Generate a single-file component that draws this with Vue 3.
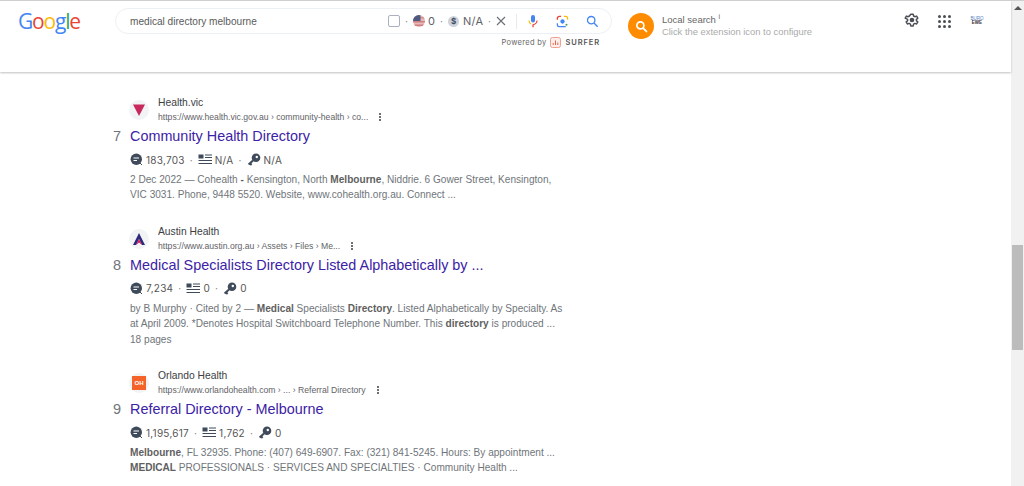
<script setup>
const results = [
  {
    rank: 7, site: 'Health.vic', fav: 'vic',
    url: 'https://www.health.vic.gov.au › community-health › co...',
    title: 'Community Health Directory',
    s1: '183,703', s2: 'N/A', s3: 'N/A',
    lines: [
      [['2 Dec 2022 — Cohealth ', 0], ['-', 1], [' Kensington, North ', 0], ['Melbourne', 1], [', Niddrie. 6 Gower Street, Kensington,', 0]],
      [['VIC 3031. Phone, 9448 5520. Website, www.cohealth.org.au. Connect ...', 0]]
    ]
  },
  {
    rank: 8, site: 'Austin Health', fav: 'austin',
    url: 'https://www.austin.org.au › Assets › Files › Me...',
    title: 'Medical Specialists Directory Listed Alphabetically by ...',
    s1: '7,234', s2: '0', s3: '0',
    lines: [
      [['by B Murphy · Cited by 2 — ', 0], ['Medical', 1], [' Specialists ', 0], ['Directory', 1], ['. Listed Alphabetically by Specialty. As', 0]],
      [['at April 2009. *Denotes Hospital Switchboard Telephone Number. This ', 0], ['directory', 1], [' is produced ...', 0]],
      [['18 pages', 0]]
    ]
  },
  {
    rank: 9, site: 'Orlando Health', fav: 'orlando',
    url: 'https://www.orlandohealth.com › ... › Referral Directory',
    title: 'Referral Directory - Melbourne',
    s1: '1,195,617', s2: '1,762', s3: '0',
    lines: [
      [['Melbourne', 1], [', FL 32935. Phone: (407) 649-6907. Fax: (321) 841-5245. Hours: By appointment ...', 0]],
      [['MEDICAL', 1], [' PROFESSIONALS · SERVICES AND SPECIALTIES · Community Health ...', 0]]
    ]
  }
]
</script>

<template>
  <div class="window">
    <div class="page">
      <header class="topbar">
        <div class="logo">
          <span class="b">G</span><span class="r">o</span><span class="y">o</span><span class="b">g</span><span class="g">l</span><span class="r">e</span>
        </div>
        <div class="search-col">
          <div class="searchbox">
            <span class="query">medical directory melbourne</span>
            <span class="checkbox"></span>
            <span class="dot">·</span>
            <svg class="flag" viewBox="0 0 12 12" width="12" height="12">
              <defs><clipPath id="fc"><circle cx="6" cy="6" r="6" /></clipPath></defs>
              <g clip-path="url(#fc)">
                <rect width="12" height="12" fill="#e8b8b8" />
                <rect y="2" width="12" height="1.5" fill="#d98f8f" />
                <rect y="6" width="12" height="1.5" fill="#cf7f7f" />
                <rect y="9.5" width="12" height="1.5" fill="#cf7f7f" />
                <rect width="7.5" height="6" fill="#4f5a80" />
              </g>
            </svg>
            <span class="metric zero">0</span>
            <span class="dot">·</span>
            <span class="dollar">$</span>
            <span class="metric na">N/A</span>
            <span class="dot">·</span>
            <svg class="close" viewBox="0 0 10 10" width="10" height="10">
              <path d="M1 1l8 8M9 1l-8 8" stroke="#6a6f76" stroke-width="1.1" fill="none" />
            </svg>
            <span class="divider"></span>
            <svg class="mic" viewBox="0 0 12 14" width="12" height="14">
              <rect x="4" y="1" width="4" height="7.5" rx="2" fill="#4285f4" />
              <path d="M2 6.5a4 4 0 0 0 2 3.4" stroke="#fbbc05" stroke-width="1.2" fill="none" />
              <path d="M10 6.5a4 4 0 0 1-4 4" stroke="#ea4335" stroke-width="1.2" fill="none" />
              <path d="M6 10.5v2.8" stroke="#ea4335" stroke-width="1.3" />
            </svg>
            <svg class="lens" viewBox="0 0 14 14" width="13" height="13">
              <path d="M1.5 5V3.5a2 2 0 0 1 2-2H5.5" stroke="#ea4335" stroke-width="1.4" fill="none" />
              <path d="M8.5 1.5h2a2 2 0 0 1 2 2V5" stroke="#fbbc05" stroke-width="1.4" fill="none" />
              <path d="M1.5 9v1.5a2 2 0 0 0 2 2h7" stroke="#4285f4" stroke-width="1.4" fill="none" />
              <circle cx="7" cy="7" r="2.3" fill="#4285f4" />
              <circle cx="11.3" cy="10.6" r="1.1" fill="#34a853" />
            </svg>
            <svg class="mag" viewBox="0 0 14 14" width="13" height="13">
              <circle cx="5.6" cy="5.6" r="4" stroke="#4285f4" stroke-width="1.4" fill="none" />
              <path d="M8.6 8.6l4 4" stroke="#4285f4" stroke-width="1.5" />
            </svg>
          </div>
          <div class="powered">
            <span>Powered by</span>
            <svg viewBox="0 0 11 11" width="11" height="11">
              <rect x="0.5" y="0.5" width="10" height="10" rx="2" fill="#fdeeea" stroke="#f0a090" />
              <path d="M3.2 8V6M5.5 8V3.5M7.8 8V5.5" stroke="#e8664f" stroke-width="1" />
            </svg>
            <span class="surfer">SURFER</span>
          </div>
        </div>
        <div class="local">
          <span class="orange">
            <svg viewBox="0 0 14 14" width="13" height="13">
              <circle cx="5.8" cy="5.8" r="3.8" stroke="#fff" stroke-width="1.8" fill="none" />
              <path d="M8.7 8.7l3.6 3.6" stroke="#fff" stroke-width="2" stroke-linecap="round" />
            </svg>
          </span>
          <div class="local-text">
            <div class="local-title">Local search <sup>i</sup></div>
            <div class="local-sub">Click the extension icon to configure</div>
          </div>
        </div>
        <div class="tools">
          <svg class="gear" viewBox="0 0 16 16" width="16" height="16">
            <path d="M6.8 1.2h2.4l.4 1.8 1.2.7 1.8-.6 1.2 2.1-1.4 1.2v1.3l1.4 1.2-1.2 2.1-1.8-.6-1.2.7-.4 1.8H6.8l-.4-1.8-1.2-.7-1.8.6-1.2-2.1 1.4-1.2V6.4L1.2 5.2l1.2-2.1 1.8.6 1.2-.7z" fill="none" stroke="#4a4f55" stroke-width="1.5" stroke-linejoin="round" />
            <circle cx="8" cy="7.05" r="2.3" fill="#4a4f55" />
          </svg>
          <div class="apps"><i v-for="n in 9" :key="n"></i></div>
          <div class="account"><span class="acc-a">BURO</span><span class="acc-b">EWE</span></div>
        </div>
      </header>

      <main class="results">
        <p class="peek"><span class="w1">Melbourne,</span><span class="w2">Victoria,</span><span class="w3">Australia,</span></p>
        <article v-for="r in results" :key="r.rank" class="result">
          <div class="head">
            <span class="fav">
              <svg v-if="r.fav === 'vic'" viewBox="0 0 14 14" width="14" height="14">
                <path d="M1 1.5h12L7 13z" fill="#c8285c" />
              </svg>
              <svg v-else-if="r.fav === 'austin'" viewBox="0 0 14 14" width="14" height="14">
                <path d="M7 1l6 12h-3L7 7l-3 6H1z" fill="#2b2a7c" />
                <path d="M4 13l3-6 3 6-3-2.4z" fill="#d8185c" />
              </svg>
              <span v-else class="oh">OH</span>
            </span>
            <div class="source">
              <div class="site">{{ r.site }}</div>
              <div class="urlrow">
                <span class="url">{{ r.url }}</span>
                <span class="kebab"><i></i><i></i><i></i></span>
              </div>
            </div>
          </div>
          <div class="titlerow">
            <span class="rank">{{ r.rank }}</span>
            <a class="title">{{ r.title }}</a>
          </div>
          <div class="stats">
            <svg viewBox="0 0 13 13" width="13" height="13">
              <circle cx="6.3" cy="6.3" r="5.7" fill="#3f4a5a" />
              <path d="M3.5 5h5.5M3.5 7.5h3.5" stroke="#fff" stroke-width="1.1" />
              <path d="M10 10l2 2" stroke="#3f4a5a" stroke-width="1" />
            </svg>
            <span>{{ r.s1 }}</span><span class="sep">·</span>
            <svg viewBox="0 0 14 11" width="14" height="11">
              <rect x="0.5" y="0.5" width="5" height="4" fill="#3f4a5a" />
              <path d="M7 1h7M7 3.5h7M0.5 6.5h13.5M0.5 9.5h13.5" stroke="#3f4a5a" stroke-width="1" />
            </svg>
            <span>{{ r.s2 }}</span><span class="sep">·</span>
            <svg viewBox="0 0 14 13" width="14" height="13">
              <circle cx="9" cy="4.8" r="4.3" fill="#3f4a5a" />
              <circle cx="9.8" cy="4" r="1.2" fill="#fff" />
              <path d="M6 7.5L1.6 11.5M3 10.3l1.6 1.6" stroke="#3f4a5a" stroke-width="2.1" fill="none" />
            </svg>
            <span>{{ r.s3 }}</span>
          </div>
          <div class="snippet">
            <div v-for="(line, i) in r.lines" :key="i" class="line">
              <template v-for="(part, j) in line" :key="j">
                <b v-if="part[1]">{{ part[0] }}</b>
                <template v-else>{{ part[0] }}</template>
              </template>
            </div>
          </div>
        </article>
      </main>
    </div>

    <aside class="scrollbar">
      <span class="arrow"></span>
      <span class="thumb"></span>
    </aside>
  </div>
</template>

<style>
html, body { margin: 0; background: #fff; overflow: hidden; }
</style>

<style scoped>
.window {
  width: 1024px;
  height: 486px;
  display: flex;
  overflow: hidden;
  background: #fff;
  font-family: "Liberation Sans", Arial, sans-serif;
  box-sizing: border-box;
  border-top: 1px solid #cfcfcf;
}
.page { flex: 1; min-width: 0; display: flex; flex-direction: column; }

.topbar {
  height: 71px;
  flex: none;
  display: flex;
  align-items: flex-start;
  background: #fff;
  box-shadow: 0 1px 2px rgba(0, 0, 0, .25);
  position: relative;
  z-index: 2;
}
.logo {
  width: 115px;
  flex: none;
  box-sizing: border-box;
  padding: 5px 0 0 18px;
  font-family: "Open Sans", sans-serif;
  font-size: 21px;
  line-height: 30px;
  letter-spacing: -1.2px;
}
.b { color: #4285f4; } .r { color: #ea4335; } .y { color: #fbbc05; } .g { color: #34a853; }

.search-col { width: 497px; flex: none; padding-top: 7px; }
.searchbox {
  height: 26px;
  box-sizing: border-box;
  border: 1px solid #edf0f2;
  border-radius: 13px;
  display: flex;
  align-items: center;
  padding-left: 14px;
  font-family: "Inter", sans-serif;
  font-size: 11px;
  color: #555;
}
.query { width: 258px; flex: none; font-family: "Liberation Sans", sans-serif; font-size: 10.1px; color: #5a5a5a; }
.checkbox { width: 10px; height: 10px; border: 1px solid #a9b1c0; border-radius: 2px; flex: none; }
.dot { width: 13px; text-align: center; color: #888; flex: none; font-size: 10px; }
.flag { flex: none; }
.metric { color: #5f6368; flex: none; }
.zero { margin-left: 3px; width: 7px; }
.dollar {
  width: 11px; height: 11px; border-radius: 50%; background: #cdd3dc; color: #3f4a5a;
  font-size: 8px; font-weight: 700; line-height: 11px; text-align: center; flex: none;
}
.na { margin-left: 4px; width: 20px; white-space: nowrap; letter-spacing: .2px; }
.close { margin-left: 0; flex: none; }
.divider { width: 1px; height: 15px; background: #e8eaed; margin-left: 10px; flex: none; }
.mic { margin-left: 10px; flex: none; }
.lens { margin-left: 17px; flex: none; }
.mag { margin-left: 17px; flex: none; }

.powered {
  display: flex;
  justify-content: flex-end;
  align-items: center;
  gap: 4px;
  height: 17px;
  padding: 0 12px 0 0;
  font-family: "Inter", sans-serif;
  font-size: 7.5px;
  letter-spacing: .3px;
  color: #666;
}
.surfer { font-weight: 600; letter-spacing: .9px; color: #555; }

.local { display: flex; align-items: center; gap: 8px; margin: 12px 0 0 16px; width: 255px; flex: none; }
.orange {
  width: 26px; height: 26px; border-radius: 50%; background: #ff8c00;
  display: flex; align-items: center; justify-content: center; flex: none;
}
.local-title { font-size: 9.5px; line-height: 12px; color: #666; }
.local-title sup { font-size: 7px; line-height: 0; }
.local-sub { font-size: 9.4px; line-height: 12px; color: #aaa; white-space: nowrap; }

.tools { display: flex; align-items: center; margin-top: 12px; padding-left: 21px; }
.gear { flex: none; }
.apps { display: grid; grid-template-columns: repeat(3, 3px); gap: 2px; margin-left: 18px; }
.apps i { width: 3px; height: 3px; border-radius: 50%; background: #4a4f55; display: block; }
.account { display: flex; flex-direction: column; margin-left: 19px; font-size: 4.5px; line-height: 4.5px; width: 14px; text-align: center; }
.acc-a { color: #5d7fc0; }
.acc-b { color: #333; font-weight: 700; }

.results { padding-left: 113px; color: #555; flex: 1; min-height: 0; }
.peek { margin: -12px 0 0 0; height: 36px; display: flex; font-size: 10.1px; line-height: 14px; color: #666; }
.peek span { text-align: right; flex: none; }
.w1 { width: 145px; }
.w2 { width: 77px; }
.w3 { width: 56px; }
.result { margin-bottom: 22px; }
.head { display: flex; padding-left: 16px; height: 28px; }
.fav {
  width: 20px; height: 20px; border-radius: 50%; background: #f1f3f4;
  display: flex; align-items: center; justify-content: center; flex: none; margin-top: 4px;
}
.oh {
  width: 14px; height: 14px; background: #f4642a; color: #fff; font-size: 6px; font-weight: 700;
  line-height: 14px; text-align: center; display: block;
}
.source { margin-left: 9px; }
.site { font-size: 10.3px; line-height: 14px; color: #3c4043; }
.urlrow { display: flex; align-items: center; height: 14px; }
.url { font-size: 8.65px; color: #5f6368; white-space: nowrap; }
.kebab { display: flex; flex-direction: column; gap: 1px; margin-left: 11px; }
.kebab i { width: 2px; height: 2px; background: #3c4043; border-radius: 50%; display: block; }
.titlerow { display: flex; align-items: center; height: 24px; }
.rank { width: 17px; flex: none; font-size: 14.5px; color: #70757a; }
.title { font-size: 14.4px; color: #3c22a6; white-space: nowrap; }
.stats {
  display: flex; align-items: center; gap: 3px; height: 21px; margin-top: 1px; padding-left: 17px;
  font-family: "Inter", sans-serif; font-size: 10px; letter-spacing: .25px; color: #555;
}
.stats svg { flex: none; }
.sep { margin: 0 2px; color: #888; }
.snippet { padding-left: 17px; margin-top: 2px; font-size: 10.1px; line-height: 15.4px; color: #70757a; white-space: nowrap; }
.snippet b { font-weight: 700; color: #5f5f5f; }

.scrollbar { width: 13px; flex: none; background: #f1f1f1; display: flex; flex-direction: column; align-items: center; }
.arrow {
  width: 0; height: 0; margin-top: 5px;
  border-left: 4px solid transparent; border-right: 4px solid transparent; border-bottom: 4px solid #555;
}
.thumb { width: 11px; height: 105px; margin-top: 235px; background: #bcbcbc; }
</style>
